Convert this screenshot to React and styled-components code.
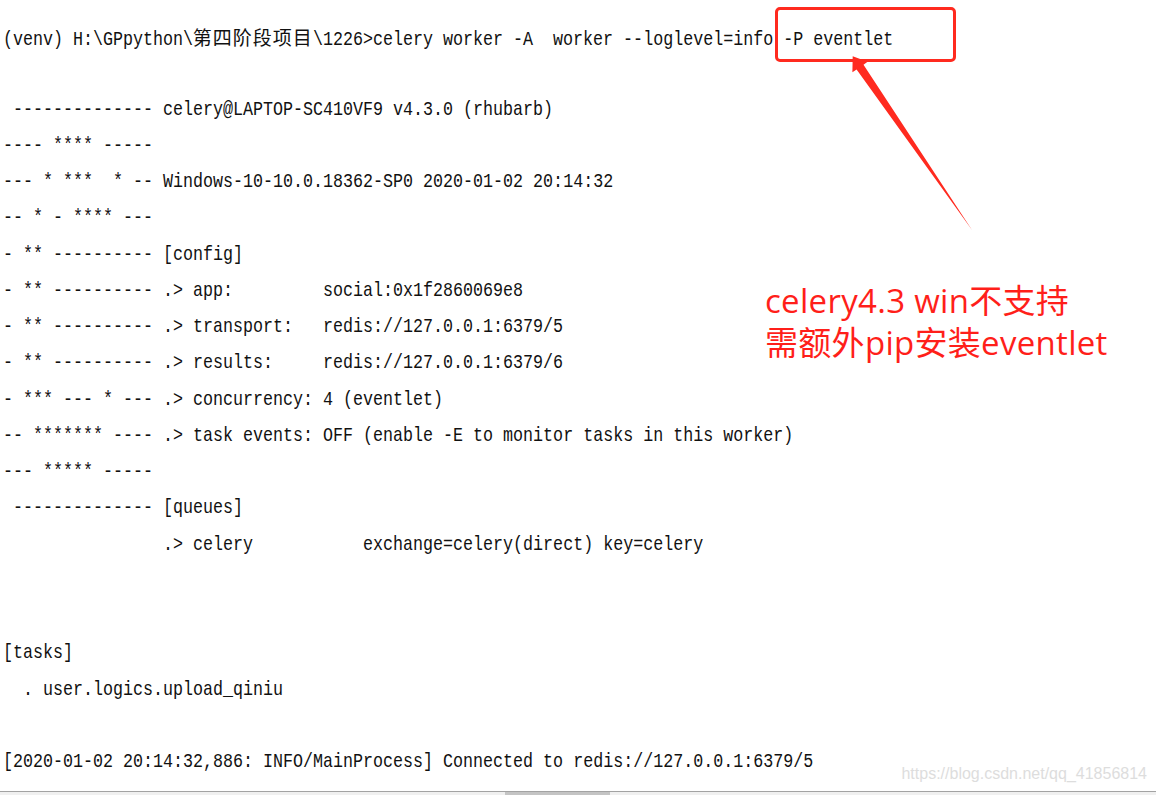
import React from 'react'
import styled, { createGlobalStyle } from 'styled-components'

const GlobalStyle = createGlobalStyle`
  html, body {
    margin: 0;
    padding: 0;
    background: #fff;
  }
  body {
    width: 1156px;
    height: 795px;
    overflow: hidden;
  }
`

const Page = styled.div`
  position: relative;
  width: 1156px;
  height: 795px;
  display: flex;
  flex-direction: column;
  background: #fff;
  overflow: hidden;
`

// Console output, SimSun-like narrow mono: 10px per cell
const Console = styled.div`
  flex: 1;
  padding: 19px 0 0 3px;
`

const Lines = styled.div`
  display: flex;
  flex-direction: column;
  font-family: "Liberation Mono", monospace;
  font-size: 21px;
  color: #111;
  transform: scaleX(0.7937);
  transform-origin: 0 0;
`

const Line = styled.div`
  height: 36.25px;
  line-height: 36.25px;
  white-space: pre;
`

// full-width chars, two cells each
const Cjk = styled.span`
  display: inline-block;
  width: ${p => (p.$count * 20) / 0.7937}px;
  font-family: "Noto Sans CJK SC", sans-serif;
  font-size: 19px;
  letter-spacing: 1px;
  transform: scaleX(1.26);
  transform-origin: 0 50%;
`

const ScrollTrack = styled.div`
  height: 3px;
  border-top: 1px solid #a3a3a3;
  background: #f0f0f0;
  display: flex;
`

const ScrollThumb = styled.div`
  margin-left: 505px;
  width: 105px;
  background: #c4c4c4;
`

// annotations drawn over the console
const Callout = styled.div`
  position: absolute;
  left: 775px;
  top: 7px;
  width: 181px;
  height: 55px;
  box-sizing: border-box;
  border: 3px solid #ff2a1f;
  border-radius: 5px;
`

const Arrow = styled.svg`
  position: absolute;
  left: 840px;
  top: 50px;
  width: 140px;
  height: 190px;
`

const Note = styled.div`
  position: absolute;
  left: 765px;
  top: 280px;
  display: flex;
  flex-direction: column;
  font-family: "Open Sans", "Noto Sans CJK SC", sans-serif;
  font-size: 33px;
  letter-spacing: 0.3px;
  line-height: 42px;
  color: #ff1f1a;
  white-space: pre;
`

const Watermark = styled.div`
  position: absolute;
  right: 9px;
  top: 764px;
  font-family: "Liberation Sans", sans-serif;
  font-size: 16px;
  line-height: 20px;
  color: #dddddd;
`

const output = [
  ' -------------- celery@LAPTOP-SC410VF9 v4.3.0 (rhubarb)',
  '---- **** -----',
  '--- * ***  * -- Windows-10-10.0.18362-SP0 2020-01-02 20:14:32',
  '-- * - **** ---',
  '- ** ---------- [config]',
  '- ** ---------- .> app:         social:0x1f2860069e8',
  '- ** ---------- .> transport:   redis://127.0.0.1:6379/5',
  '- ** ---------- .> results:     redis://127.0.0.1:6379/6',
  '- *** --- * --- .> concurrency: 4 (eventlet)',
  '-- ******* ---- .> task events: OFF (enable -E to monitor tasks in this worker)',
  '--- ***** -----',
  ' -------------- [queues]',
  '                .> celery           exchange=celery(direct) key=celery',
  '',
  '',
  '[tasks]',
  '  . user.logics.upload_qiniu',
  '',
  '[2020-01-02 20:14:32,886: INFO/MainProcess] Connected to redis://127.0.0.1:6379/5',
]

const App = () => (
  <>
    <GlobalStyle />
    <Page>
      <Console>
        <Lines>
          <Line>
            (venv) H:\GPpython\<Cjk $count={6}>第四阶段项目</Cjk>\1226&gt;celery worker -A  worker --loglevel=info -P eventlet
          </Line>
          <Line />
          {output.map((text, i) => (
            <Line key={i}>{text}</Line>
          ))}
        </Lines>
      </Console>
      <ScrollTrack>
        <ScrollThumb />
      </ScrollTrack>

      <Callout />
      <Arrow viewBox="0 0 140 190">
        <polygon
          points="12.7,6.3 27.6,11.8 23.5,14.8 132,180 16.6,19.4 12.4,22.3"
          fill="#ff2a1f"
        />
      </Arrow>
      <Note>
        <span>celery4.3 win不支持</span>
        <span>需额外pip安装eventlet</span>
      </Note>
      <Watermark>https://blog.csdn.net/qq_41856814</Watermark>
    </Page>
  </>
)

export default App
